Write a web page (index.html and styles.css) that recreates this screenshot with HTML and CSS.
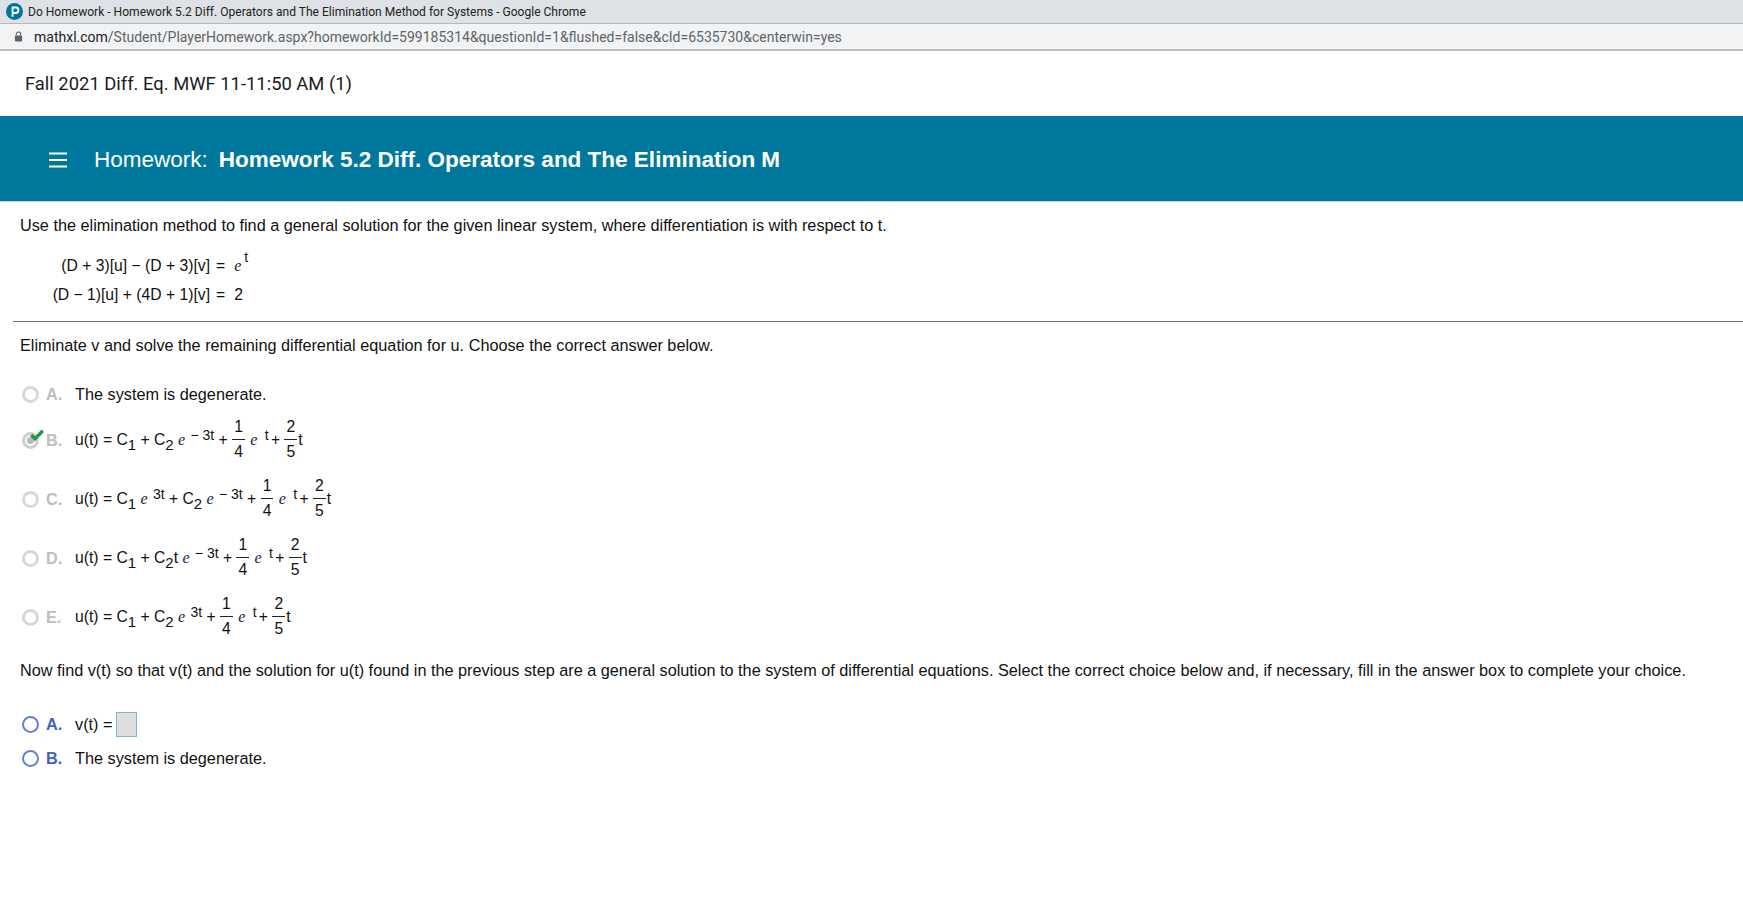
FILE: index.html
```html
<!DOCTYPE html>
<html lang="en">
<head>
<meta charset="utf-8">
<title>Do Homework</title>
<link rel="stylesheet" href="styles.css">
</head>
<body>
<header class="chrome-title">
  <svg class="favicon" viewBox="0 0 16 16"><circle cx="8" cy="8" r="8" fill="#00769c"/><path d="M6.200 13V4.200h2.900a2.600 2.600 0 0 1 0 5.200H6.200" fill="none" stroke="#fff" stroke-width="1.800"/></svg>
  <span>Do Homework - Homework 5.2 Diff. Operators and The Elimination Method for Systems - Google Chrome</span>
</header>
<div class="chrome-url">
  <svg class="lock" viewBox="0 0 10 12"><path d="M2.500 5V3.500a2.500 2.500 0 0 1 5 0V5" fill="none" stroke="#5f6368" stroke-width="1.200"/><rect x="1" y="5" width="8" height="6.500" rx="1" fill="#5f6368"/></svg>
  <span><span class="host">mathxl.com</span>/Student/PlayerHomework.aspx?homeworkId=599185314&amp;questionId=1&amp;flushed=false&amp;cId=6535730&amp;centerwin=yes</span>
</div>
<div class="course">Fall 2021 Diff. Eq. MWF 11-11:50 AM (1)</div>
<div class="band">
  <svg class="menu" viewBox="0 0 18 16"><path d="M0 1.500h18M0 8h18M0 14.500h18" stroke="#fff" stroke-width="2"/></svg>
  <span class="band-label">Homework:</span>
  <span class="band-name">Homework 5.2 Diff. Operators and The Elimination M</span>
</div>
<main>
  <section class="statement">
    <p class="q-first">Use the elimination method to find a general solution for the given linear system, where differentiation is with respect to t.</p>
    <div class="system">
      <span class="lhs">(D + 3)[u] − (D + 3)[v]</span><span class="rhs"><span class="eq">=</span><i class="e">e</i><sup class="eq-exp">t</sup></span>
      <span class="lhs">(D − 1)[u] + (4D + 1)[v]</span><span class="rhs"><span class="eq">=</span>2</span>
    </div>
  </section>
  <section class="step">
    <p class="q-step">Eliminate v and solve the remaining differential equation for u. Choose the correct answer below.</p>
    <div class="choice row-a"><span class="radio"></span><span class="letter">A.</span><span>The system is degenerate.</span></div>
    <div class="choice row-math">
      <span class="radio selected"></span>
      <svg class="check" viewBox="0 0 14 12"><path d="M1.200 6l3.800 3.800 7.800-8" fill="none" stroke="#1f9a45" stroke-width="3.400"/></svg>
      <span class="letter">B.</span>
      <span class="math">u(t) = C<sub>1</sub> + C<sub>2</sub> <i class="e">e</i> <sup class="exp">− 3t</sup> + <span class="frac"><span>1</span><span>4</span></span> <i class="e">e</i> <sup class="exp exp-t">t</sup> + <span class="frac"><span>2</span><span>5</span></span>t</span>
    </div>
    <div class="choice row-math">
      <span class="radio"></span><span class="letter">C.</span>
      <span class="math">u(t) = C<sub>1</sub> <i class="e">e</i> <sup class="exp">3t</sup> + C<sub>2</sub> <i class="e">e</i> <sup class="exp">− 3t</sup> + <span class="frac"><span>1</span><span>4</span></span> <i class="e">e</i> <sup class="exp exp-t">t</sup> + <span class="frac"><span>2</span><span>5</span></span>t</span>
    </div>
    <div class="choice row-math">
      <span class="radio"></span><span class="letter">D.</span>
      <span class="math">u(t) = C<sub>1</sub> + C<sub>2</sub>t <i class="e">e</i> <sup class="exp">− 3t</sup> + <span class="frac"><span>1</span><span>4</span></span> <i class="e">e</i> <sup class="exp exp-t">t</sup> + <span class="frac"><span>2</span><span>5</span></span>t</span>
    </div>
    <div class="choice row-math">
      <span class="radio"></span><span class="letter">E.</span>
      <span class="math">u(t) = C<sub>1</sub> + C<sub>2</sub> <i class="e">e</i> <sup class="exp">3t</sup> + <span class="frac"><span>1</span><span>4</span></span> <i class="e">e</i> <sup class="exp exp-t">t</sup> + <span class="frac"><span>2</span><span>5</span></span>t</span>
    </div>
    <p class="q-final">Now find v(t) so that v(t) and the solution for u(t) found in the previous step are a general solution to the system of differential equations. Select the correct choice below and, if necessary, fill in the answer box to complete your choice.</p>
    <div class="choice active row-box"><span class="radio"></span><span class="letter">A.</span><span>v(t) =</span><span class="answer"></span></div>
    <div class="choice active row-b"><span class="radio"></span><span class="letter">B.</span><span>The system is degenerate.</span></div>
  </section>
</main>
</body>
</html>
```
FILE: styles.css
```css
* { box-sizing: border-box; }
html, body { margin: 0; height: 100%; background: #fff; overflow: hidden; }
body { font-family: "Liberation Sans", Arial, sans-serif; font-size: 16.25px; color: #111; }
p { margin: 0; }

.chrome-title { height: 24px; background: #dee1e6; border-bottom: 1px solid #b5b7ba; display: flex; align-items: center; padding-left: 6px; gap: 5px; font: 12.050px Roboto, sans-serif; color: #222; }
.favicon { width: 17px; height: 17px; }
.chrome-url { height: 27px; background: #f1f3f4; border-bottom: 2px solid #bcbec0; display: flex; align-items: center; padding-left: 14px; gap: 11px; font: 14px Roboto, sans-serif; color: #5f6368; }
.lock { width: 9px; height: 11px; }
.host { color: #202124; }

.course { height: 65px; padding-bottom: 1px; display: flex; align-items: center; padding-left: 25px; font: 18.400px Roboto, sans-serif; color: #1c1c1c; }

.band { height: 86px; padding-top: 3px; background: #00789e; color: #fff; border-bottom: 1px solid #c9d6da; display: flex; align-items: center; padding-left: 49px; font-size: 22.500px; }
.menu { width: 18px; height: 16px; margin-right: 27px; }
.band-label { margin-right: 11px; }
.band-name { font-weight: 700; }

.statement { height: 120px; border-bottom: 1px solid #6b7378; margin-left: 13px; padding-left: 7px; }
.q-first { padding-top: 14px; line-height: 18px; }
.system { display: grid; grid-template-columns: 190px auto; justify-content: start; margin-top: 21px; row-gap: 8px; column-gap: 6px; line-height: 21px; font-size: 15.700px; }
.lhs { text-align: right; white-space: nowrap; }
.eq { margin-right: 9px; }
.e { font-family: "Liberation Serif", serif; color: #14213d; font-size: 16px; }
.exp { font-size: 14px; vertical-align: 5px; line-height: 0; margin-left: 1px; }
.exp-t { margin-left: 3px; margin-right: -2px; }
.eq-exp { font-size: 14px; vertical-align: 9px; line-height: 0; margin-left: 3px; }

.step { padding: 14px 20px 0; }
.q-step { line-height: 18px; margin-bottom: 30px; }
.choice { display: flex; align-items: center; position: relative; padding-left: 2px; height: 20px; }
.radio { width: 17px; height: 17px; border-radius: 50%; border: 3px solid #d8d8d8; background: #fff; flex: none; }
.radio.selected { background: #b9b9b9; box-shadow: inset 0 0 0 2px #fff; border-color: #cfcfcf; }
.letter { width: 36px; padding-left: 7px; color: #bdbdbd; font-weight: 700; flex: none; }
.check { position: absolute; left: 10px; top: calc(50% - 12px); width: 14px; height: 12px; }
.row-a { margin-bottom: 12px; }
.row-math { height: 49px; margin-bottom: 10px; }
.math { display: block; white-space: nowrap; font-size: 15.700px; }
sub { font-size: 15px; vertical-align: -5px; line-height: 0; }
.frac { display: inline-block; vertical-align: middle; text-align: center; line-height: 18px; margin: -2px 1px 0 0; }
.frac span { display: block; padding: 0 2px; }
.frac span:first-child { border-bottom: 1px solid #222; padding-bottom: 3px; }
.frac span:last-child { padding-top: 3px; }
.q-final { margin: 19px 0 32px; line-height: 18px; white-space: nowrap; }
.active .radio { border-color: #6680cc; border-width: 2.500px; }
.active .letter { color: #3f5fc4; }
.row-box { height: 26px; margin-bottom: 11px; }
.answer { width: 21px; height: 25px; margin-left: 4px; background: #dedede; border: 1px solid #7ab8cf; }
```
